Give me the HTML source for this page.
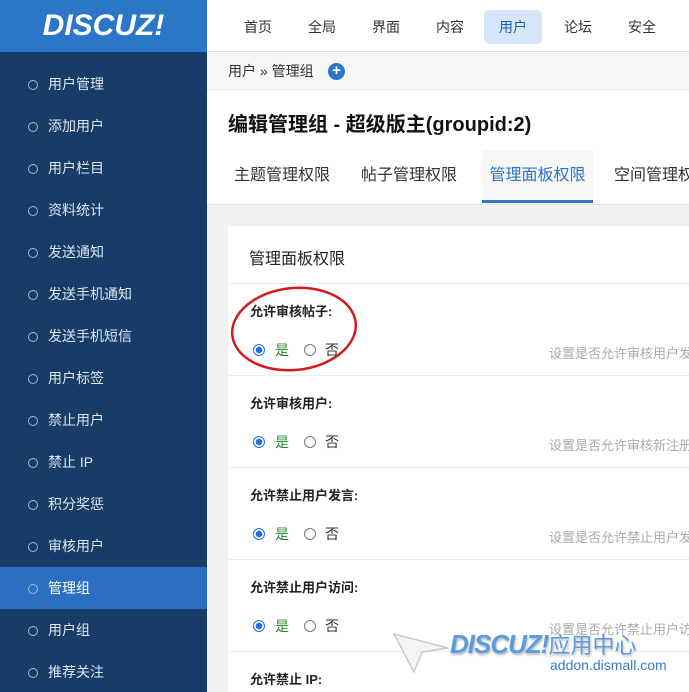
<!DOCTYPE html>
<html><head><meta charset="utf-8"><style>
*{margin:0;padding:0;box-sizing:border-box}
html,body{width:689px;height:692px;overflow:hidden}
body{position:relative;background:#fff;font-family:"Liberation Sans","Noto Sans CJK SC",sans-serif;color:#333}
#wrap{position:absolute;left:0;top:0;width:689px;height:692px;overflow:hidden}
.abs{position:absolute}
#side{left:0;top:0;width:207px;height:692px;background:#173c68}
#logo{left:0;top:0;width:207px;height:52px;background:#2c76c8;color:#fff;font-size:30px;font-style:italic;font-weight:bold;text-align:center;line-height:52px;letter-spacing:0}
.it{position:absolute;left:0;width:207px;height:42px;line-height:42px;color:#dfe6ef;font-size:14px;padding-left:48px}
.it:before{content:"";position:absolute;left:28px;top:17px;width:8px;height:8px;border:1px solid #aab7c8;border-radius:50%}
.it.on{background:#2a6fc0;color:#fff}
#nav{left:207px;top:0;width:482px;height:52px;background:#fff;border-bottom:1px solid #ddd}
.n{position:absolute;top:10px;height:34px;line-height:34px;font-size:14px;color:#333;padding:0 15px}
.n.on{background:#d6e6f8;border-radius:5px;color:#1f5fa8}
#bc{left:207px;top:53px;width:482px;height:37px;background:#f6f6f6;font-size:14px;line-height:37px;padding-left:21px;color:#333;border-bottom:1px solid #e8e8e8}
#plus{position:absolute;left:121px;top:10px;width:17px;height:17px;border-radius:50%;background:#2c76c8;color:#fff;font-size:15px;line-height:16px;text-align:center;font-weight:bold}
h1{position:absolute;left:228px;top:108px;font-size:20px;font-weight:bold;color:#111}
.tab{position:absolute;top:150px;height:53px;line-height:52px;font-size:16px;color:#333}
#gray{left:207px;top:204px;width:482px;height:488px;background:#f1f1f1;border-top:1px solid #e4e4e4}
#card{left:228px;top:226px;width:461px;height:466px;background:#fff}
.lab{position:absolute;left:250px;font-size:13px;font-weight:bold;color:#222}
.rad{position:absolute;left:253px;font-size:14px;height:20px;width:120px}
.rad .r{position:absolute;top:4px}
.rad span.t{position:absolute;top:0}
.r{display:inline-block;width:12px;height:12px;border-radius:50%;border:1px solid #777}
.r.c{border:1px solid #1a73e8;background:radial-gradient(#1a73e8 0 3px,#fff 3.5px)}
.hint{position:absolute;left:549px;font-size:13px;color:#aaa;white-space:nowrap}
.hr{position:absolute;left:228px;width:461px;height:1px;background:#ececec}
</style></head><body><div id="wrap">
<div id="side" class="abs"></div>
<div id="logo" class="abs">DISCUZ!</div>
<div class="it" style="top:63px">用户管理</div>
<div class="it" style="top:105px">添加用户</div>
<div class="it" style="top:147px">用户栏目</div>
<div class="it" style="top:189px">资料统计</div>
<div class="it" style="top:231px">发送通知</div>
<div class="it" style="top:273px">发送手机通知</div>
<div class="it" style="top:315px">发送手机短信</div>
<div class="it" style="top:357px">用户标签</div>
<div class="it" style="top:399px">禁止用户</div>
<div class="it" style="top:441px">禁止 IP</div>
<div class="it" style="top:483px">积分奖惩</div>
<div class="it" style="top:525px">审核用户</div>
<div class="it on" style="top:567px">管理组</div>
<div class="it" style="top:609px">用户组</div>
<div class="it" style="top:651px">推荐关注</div>
<div id="nav" class="abs">
<span class="n" style="left:22px">首页</span><span class="n" style="left:86px">全局</span><span class="n" style="left:150px">界面</span><span class="n" style="left:214px">内容</span><span class="n on" style="left:277px">用户</span><span class="n" style="left:342px">论坛</span><span class="n" style="left:406px">安全</span>
</div>
<div id="bc" class="abs">用户 » 管理组<span id="plus">+</span></div>
<h1>编辑管理组 - 超级版主(groupid:2)</h1>
<div class="tab" style="left:234px">主题管理权限</div>
<div class="tab" style="left:361px">帖子管理权限</div>
<div class="tab" style="left:482px;width:111px;text-align:center;background:#f6f6f6;color:#2c76c8;border-bottom:3px solid #2c76c8">管理面板权限</div>
<div class="tab" style="left:614px;width:75px;overflow:hidden;white-space:nowrap">空间管理权限</div>
<div id="gray" class="abs"></div>
<div id="card" class="abs"></div>
<div class="abs" style="left:249px;top:245px;font-size:16px;color:#222">管理面板权限</div>
<div class="hr" style="top:283px"></div>

<div class="lab" style="top:301px">允许审核帖子:</div>
<div class="rad" style="top:340px"><span class="r c" style="left:0"></span><span class="t" style="left:22px;color:#2a8a2a">是</span><span class="r" style="left:51px"></span><span class="t" style="left:72px">否</span></div>
<div class="hint" style="top:343px">设置是否允许审核用户发表的帖子</div>
<div class="hr" style="top:375px"></div>

<div class="lab" style="top:393px">允许审核用户:</div>
<div class="rad" style="top:432px"><span class="r c" style="left:0"></span><span class="t" style="left:22px;color:#2a8a2a">是</span><span class="r" style="left:51px"></span><span class="t" style="left:72px">否</span></div>
<div class="hint" style="top:435px">设置是否允许审核新注册用户</div>
<div class="hr" style="top:467px"></div>

<div class="lab" style="top:485px">允许禁止用户发言:</div>
<div class="rad" style="top:524px"><span class="r c" style="left:0"></span><span class="t" style="left:22px;color:#2a8a2a">是</span><span class="r" style="left:51px"></span><span class="t" style="left:72px">否</span></div>
<div class="hint" style="top:527px">设置是否允许禁止用户发言</div>
<div class="hr" style="top:559px"></div>

<div class="lab" style="top:577px">允许禁止用户访问:</div>
<div class="rad" style="top:616px"><span class="r c" style="left:0"></span><span class="t" style="left:22px;color:#2a8a2a">是</span><span class="r" style="left:51px"></span><span class="t" style="left:72px">否</span></div>
<div class="hint" style="top:619px">设置是否允许禁止用户访问</div>
<div class="hr" style="top:651px"></div>
<div class="lab" style="top:669px">允许禁止 IP:</div>

<svg class="abs" style="left:230px;top:286px" width="132" height="86"><ellipse cx="64" cy="43" rx="62" ry="41" fill="none" stroke="#d41a1a" stroke-width="2.5" transform="rotate(-6 64 43)"/></svg>

<svg class="abs" style="left:392px;top:630px" width="60" height="45"><path d="M2 4 L56 18 L30 22 L22 42 Z" fill="#f4f4f4" stroke="#c8c8c8" stroke-width="1.5"/></svg>
<div class="abs" style="left:450px;top:628px;font-size:26px;font-weight:bold;font-style:italic;color:#5b9be0;letter-spacing:-1px;text-shadow:1px 2px 2px #bbb;white-space:nowrap">DISCUZ!<span style="font-style:normal;font-weight:normal;font-size:22px;letter-spacing:0">应用中心</span></div>
<div class="abs" style="left:550px;top:657px;font-size:14px;color:#3a78c8">addon.dismall.com</div>
</div></body></html>
